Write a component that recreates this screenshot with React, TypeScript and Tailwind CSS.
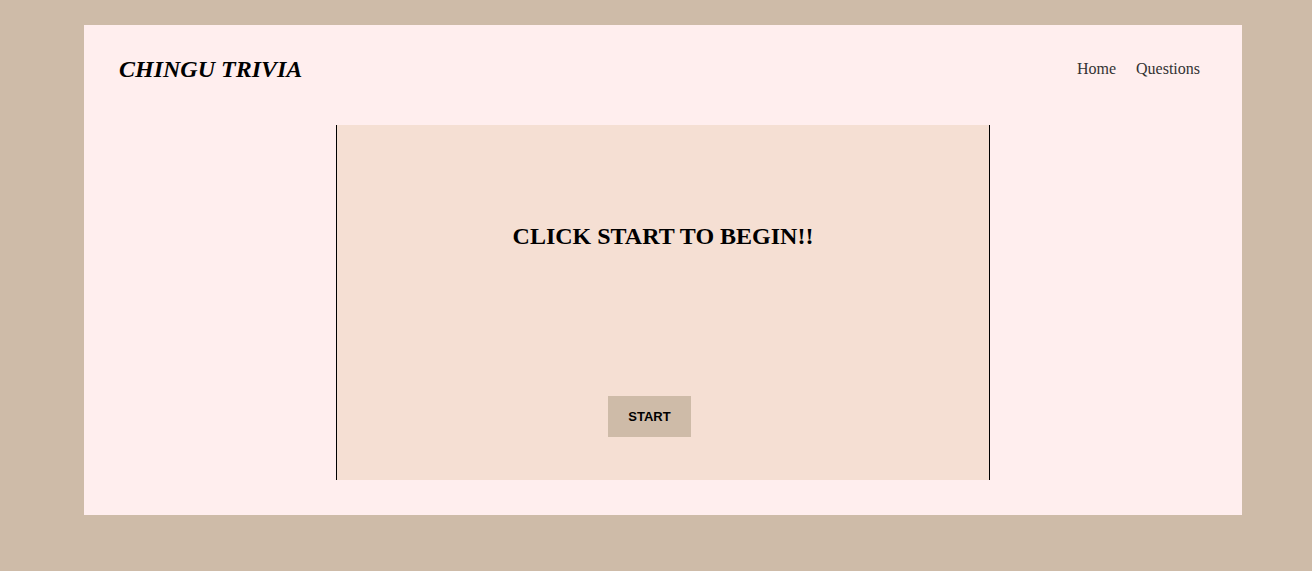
import React from 'react';

const App = () => {
  return (
    <div className="min-h-[571px] bg-[#cebba8] pt-[25px] pl-[84px]" style={{ fontFamily: '"Liberation Serif", serif' }}>
      <div className="w-[1158px] h-[490px] bg-[#ffeeee]">
        {/* Header */}
        <header className="flex items-center justify-between h-[100px] pl-[35px] pr-[42px] pb-[12px]">
          <h1 className="text-[24px] font-bold italic text-black">CHINGU TRIVIA</h1>
          <nav className="flex gap-[20px] text-[16px] text-[#333333]">
            <a href="#">Home</a>
            <a href="#">Questions</a>
          </nav>
        </header>

        {/* Game box */}
        <div className="mx-auto w-[654px] h-[355px] bg-[#f5dfd3] border-x border-black flex flex-col items-center">
          <h2 className="mt-[93px] text-[24px] font-bold text-black">CLICK START TO BEGIN!!</h2>
          <div className="mt-auto mb-[43px] w-full flex justify-center pr-[27px]">
            <button
              className="w-[83px] h-[41px] bg-[#cebba8] text-[13px] font-bold text-black"
              style={{ fontFamily: '"Liberation Sans", sans-serif' }}
            >
              START
            </button>
          </div>
        </div>
      </div>
    </div>
  );
};

export default App;
